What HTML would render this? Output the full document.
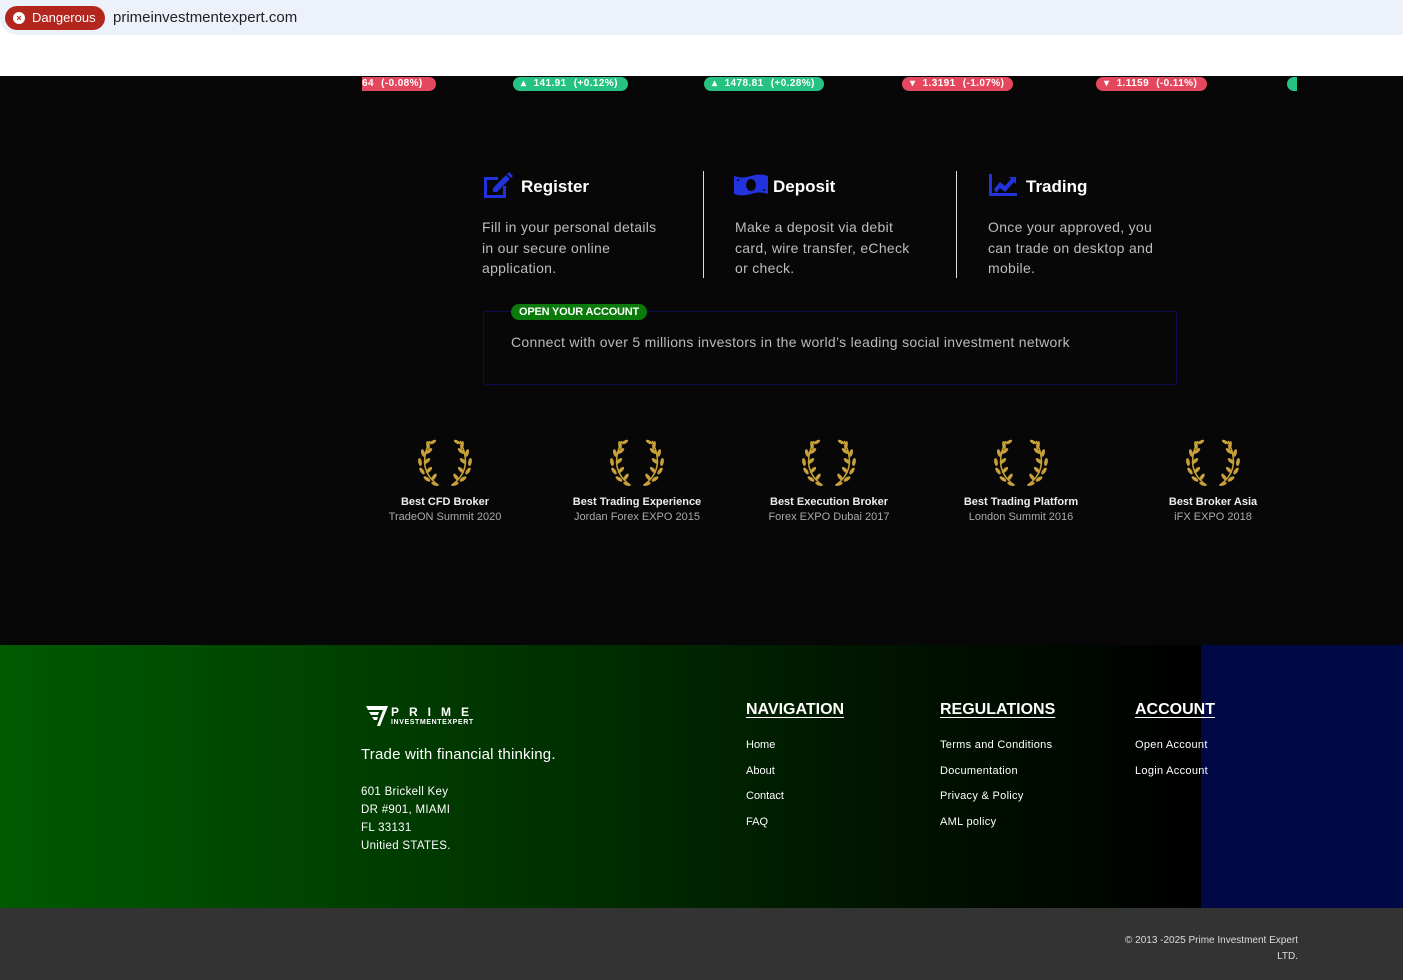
<!DOCTYPE html>
<html><head><meta charset="utf-8"><style>
*{margin:0;padding:0;box-sizing:border-box}
body{width:1403px;height:980px;overflow:hidden;background:#070707;font-family:"Liberation Sans",sans-serif;position:relative}
.abs{position:absolute}
.pill{position:absolute;top:77px;height:14px;border-radius:7px;font-size:10px;font-weight:bold;color:#fff;line-height:14px;padding:0 8px;word-spacing:4px;letter-spacing:0.4px}
.red{background:#e5475f}.grn{background:#26c281}
.h{font-size:17px;font-weight:bold;color:#fff}
.p{font-size:14px;color:#bdbdbd;line-height:20.5px;letter-spacing:0.3px}
.aw{position:absolute;top:439px;width:200px;text-align:center}
.aw b{display:block;font-size:11px;color:#eee;margin-top:4px}
.aw span{display:block;font-size:11px;color:#aaa;margin-top:3px}
.fh{position:absolute;top:701px;font-size:16px;font-weight:bold;color:#fff;text-decoration:underline;text-underline-offset:3px}
.fl{position:absolute;font-size:11px;color:#fff}
</style></head><body>
<div class="abs" style="left:0;top:0;width:1403px;height:76px;background:#fff"></div>
<div class="abs" style="left:0;top:0;width:1403px;height:35px;background:#edf1fa;border-radius:0 0 0 17px"></div>
<div class="abs" style="left:5px;top:6px;width:100px;height:24px;background:#b3261e;border-radius:12px;color:#fff;font-size:13px;line-height:24px;padding-left:27px">Dangerous</div>
<div class="abs" style="left:13px;top:12px;width:12px;height:12px;border-radius:6px;background:#fff;color:#b3261e;font-size:9px;line-height:12px;text-align:center;font-weight:bold">×</div>
<div class="abs" style="left:113px;top:9px;font-size:15px;color:#202124">primeinvestmentexpert.com</div>

<div class="pill red" style="left:362px;border-radius:0 7px 7px 0;padding-left:0;width:74px">64 (-0.08%)</div>
<div class="pill grn" style="left:513px;width:115px">▴ 141.91 (+0.12%)</div>
<div class="pill grn" style="left:704px;width:120px">▴ 1478.81 (+0.28%)</div>
<div class="pill red" style="left:902px;width:111px">▾ 1.3191 (-1.07%)</div>
<div class="pill red" style="left:1096px;width:111px">▾ 1.1159 (-0.11%)</div>
<div class="pill grn" style="left:1287px;width:10px;padding:0;border-radius:7px 0 0 7px"></div>

<svg class="abs" style="left:482px;top:172px" width="32" height="27" viewBox="0 0 32 27"><path d="M2 5h14v3H5v15h16v-9h3v12H2z" fill="#2233dd"/><path d="M11 16l13-13 4 4-13 13h-4z M25 2l2-2 4 4-2 2z" fill="#2233dd"/></svg>
<div class="abs h" style="left:521px;top:177px">Register</div>
<svg class="abs" style="left:734px;top:173px" width="34" height="24" viewBox="0 0 34 24"><path d="M0 3q8 3 17 0t17 0v18q-8-3-17 0t-17 0z" fill="#2233dd"/><ellipse cx="17" cy="12" rx="5" ry="6" fill="#070707"/><circle cx="4" cy="7" r="1" fill="#070707"/><circle cx="30" cy="17" r="1" fill="#070707"/></svg>
<div class="abs h" style="left:773px;top:177px">Deposit</div>
<svg class="abs" style="left:989px;top:174px" width="28" height="22" viewBox="0 0 28 22"><path d="M0 0h3v19h25v3H0z M5 15l6-7 5 4 6-7-2-2h7v7l-2-2-9 10-5-4-4 5z" fill="#2233dd"/></svg>
<div class="abs h" style="left:1026px;top:177px">Trading</div>
<div class="abs" style="left:703px;top:171px;width:1px;height:107px;background:#ddd"></div>
<div class="abs" style="left:956px;top:171px;width:1px;height:107px;background:#ddd"></div>
<div class="abs p" style="left:482px;top:217px">Fill in your personal details<br>in our secure online<br>application.</div>
<div class="abs p" style="left:735px;top:217px">Make a deposit via debit<br>card, wire transfer, eCheck<br>or check.</div>
<div class="abs p" style="left:988px;top:217px">Once your approved, you<br>can trade on desktop and<br>mobile.</div>

<div class="abs" style="left:483px;top:311px;width:694px;height:74px;border:1px solid #0b0b55;border-radius:3px"></div>
<div class="abs" style="left:511px;top:304px;height:16px;padding:0 8px;background:#0a7a0a;border-radius:8px;color:#fff;font-size:11px;font-weight:bold;line-height:16px;letter-spacing:-0.2px">OPEN YOUR ACCOUNT</div>
<div class="abs p" style="left:511px;top:332px;color:#bbb">Connect with over 5 millions investors in the world’s leading social investment network</div>

<svg width="0" height="0" style="position:absolute"><defs><g id="lr"><g fill="#c9a13b"><path d="M22 46Q0 30 14 2" stroke="#c9a13b" stroke-width="1.5" fill="none"/><ellipse cx="12" cy="6" rx="1.8" ry="4" transform="rotate(-10 12 6)"/><ellipse cx="17" cy="3" rx="1.6" ry="3.5" transform="rotate(60 17 3)"/><ellipse cx="7" cy="14" rx="1.8" ry="4" transform="rotate(-15 7 14)"/><ellipse cx="13" cy="12" rx="1.8" ry="4" transform="rotate(50 13 12)"/><ellipse cx="4" cy="23" rx="1.8" ry="4" transform="rotate(-10 4 23)"/><ellipse cx="11" cy="22" rx="1.8" ry="4" transform="rotate(50 11 22)"/><ellipse cx="6" cy="32" rx="1.8" ry="4" transform="rotate(-35 6 32)"/><ellipse cx="13" cy="31" rx="1.8" ry="4" transform="rotate(45 13 31)"/><ellipse cx="11" cy="40" rx="1.8" ry="4" transform="rotate(-55 11 40)"/><ellipse cx="18" cy="38" rx="1.8" ry="4" transform="rotate(35 18 38)"/><ellipse cx="19" cy="45" rx="1.6" ry="4" transform="rotate(-70 19 45)"/></g></g><g id="laurel"><use href="#lr"/><use href="#lr" transform="translate(58 0) scale(-1 1)"/></g></defs></svg>

<div class="aw" style="left:345px"><svg width="58" height="48"><use href="#laurel"/></svg><b>Best CFD Broker</b><span>TradeON Summit 2020</span></div>
<div class="aw" style="left:537px"><svg width="58" height="48"><use href="#laurel"/></svg><b>Best Trading Experience</b><span>Jordan Forex EXPO 2015</span></div>
<div class="aw" style="left:729px"><svg width="58" height="48"><use href="#laurel"/></svg><b>Best Execution Broker</b><span>Forex EXPO Dubai 2017</span></div>
<div class="aw" style="left:921px"><svg width="58" height="48"><use href="#laurel"/></svg><b>Best Trading Platform</b><span>London Summit 2016</span></div>
<div class="aw" style="left:1113px"><svg width="58" height="48"><use href="#laurel"/></svg><b>Best Broker Asia</b><span>iFX EXPO 2018</span></div>

<div class="abs" style="left:0;top:645px;width:1403px;height:263px;background:linear-gradient(90deg,#005a00 0%,#003000 40%,#001200 65%,#000 85%)"></div>
<div class="abs" style="left:1201px;top:645px;width:202px;height:263px;background:#000845"></div>
<div class="abs" style="left:0;top:908px;width:1403px;height:72px;background:#333"></div>

<svg class="abs" style="left:366px;top:705px" width="24" height="22" viewBox="0 0 24 22"><path d="M0 1h22l-8 20h-3l6-16H2z M3 7h10l-1 3H5z M6 12h6l-1 3H8z" fill="#fff"/></svg>
<div class="abs" style="left:391px;top:705px;color:#fff;font-size:12px;font-weight:bold;letter-spacing:10px">PRIME</div>
<div class="abs" style="left:391px;top:719px;color:#fff;font-size:7px;font-weight:bold;letter-spacing:0.6px">INVESTMENTEXPERT</div>
<div class="abs" style="left:361px;top:746px;color:#fff;font-size:15px;letter-spacing:0.2px">Trade with financial thinking.</div>
<div class="fl" style="left:361px;top:783px;line-height:18px;font-size:11.5px;letter-spacing:0.3px">601 Brickell Key<br>DR #901, MIAMI<br>FL 33131<br>Unitied STATES.</div>

<div class="fh" style="left:746px">NAVIGATION</div>
<div class="fl" style="left:746px;top:739px">Home</div>
<div class="fl" style="left:746px;top:765px">About</div>
<div class="fl" style="left:746px;top:790px">Contact</div>
<div class="fl" style="left:746px;top:816px">FAQ</div>
<div class="fh" style="left:940px">REGULATIONS</div>
<div class="fl" style="left:940px;top:739px;letter-spacing:0.3px">Terms and Conditions</div>
<div class="fl" style="left:940px;top:765px;letter-spacing:0.3px">Documentation</div>
<div class="fl" style="left:940px;top:790px;letter-spacing:0.3px">Privacy &amp; Policy</div>
<div class="fl" style="left:940px;top:816px;letter-spacing:0.3px">AML policy</div>
<div class="fh" style="left:1135px">ACCOUNT</div>
<div class="fl" style="left:1135px;top:739px;letter-spacing:0.3px">Open Account</div>
<div class="fl" style="left:1135px;top:765px;letter-spacing:0.3px">Login Account</div>

<div class="abs" style="right:105px;top:933px;color:#ddd;font-size:10px;text-align:right;line-height:16px">© 2013 -2025 Prime Investment Expert<br>LTD.</div>
</body></html>
